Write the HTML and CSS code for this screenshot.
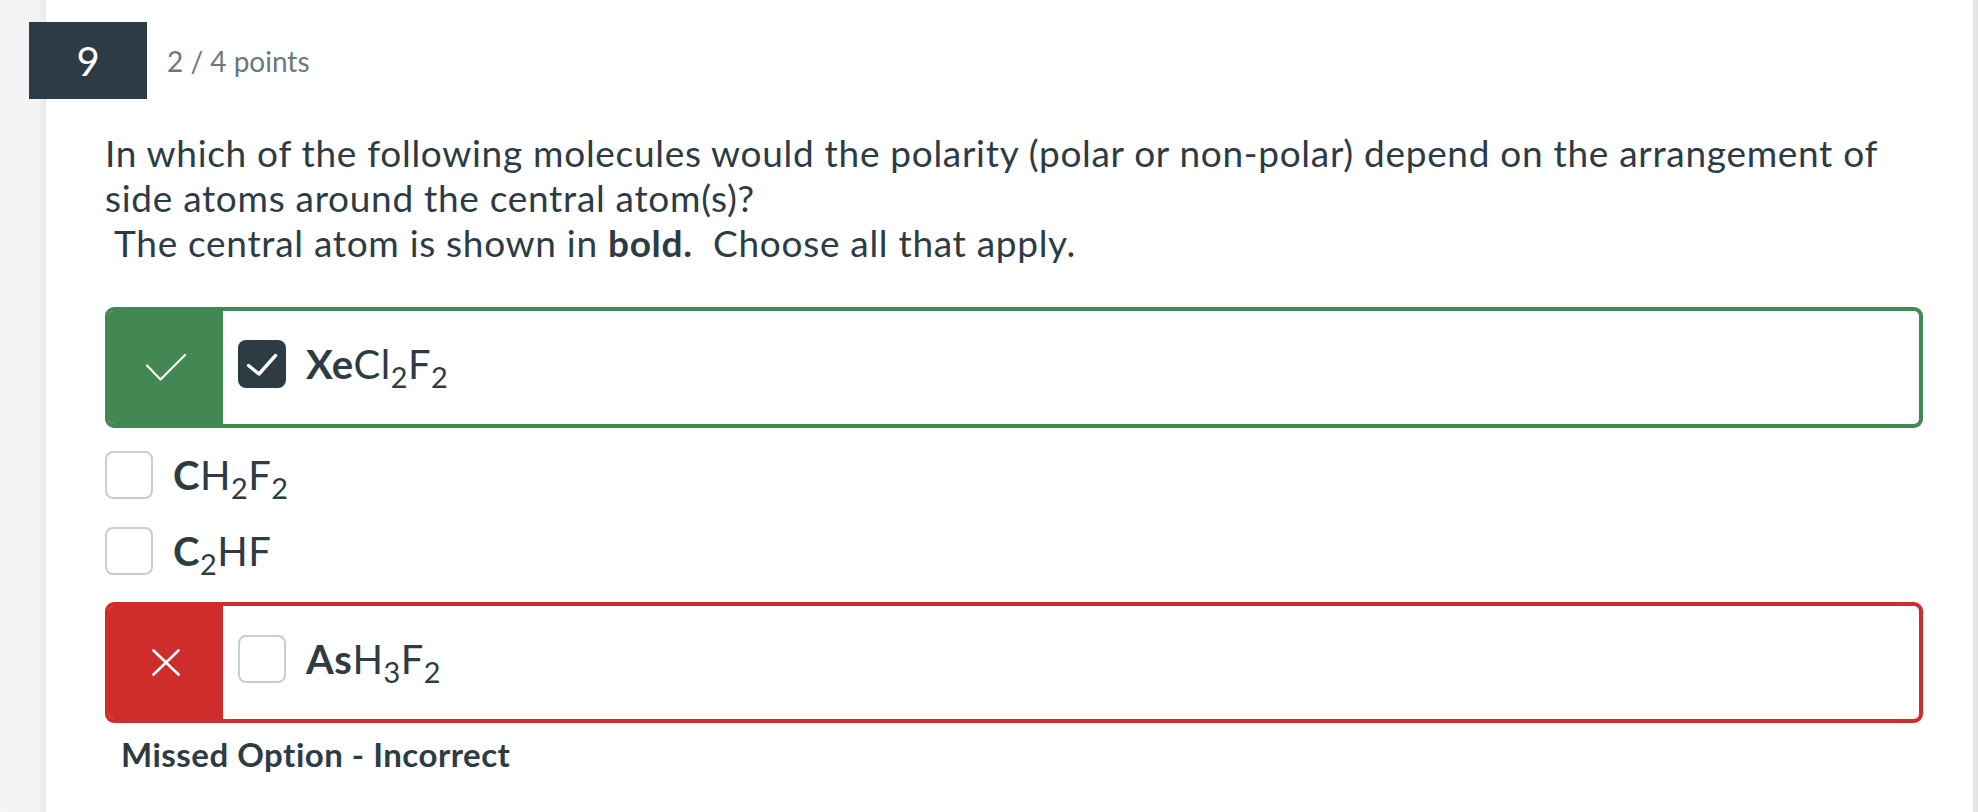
FILE: index.html
```html
<!DOCTYPE html>
<html lang="en">
<head>
<meta charset="utf-8">
<title>Question 9</title>
<link rel="stylesheet" href="styles.css">
</head>
<body>
  <div class="rail-left"></div>
  <main class="main">
    <div class="q-header">
      <div class="q-number">9</div>
      <div class="q-points">2 / 4 points</div>
    </div>
    <div class="q-text">
      <p>In which of the following molecules would the polarity (polar or non-polar) depend on the arrangement of side atoms around the central atom(s)?</p>
      <p>&nbsp;The central atom is shown in <strong>bold.</strong>&nbsp; Choose all that apply.</p>
    </div>
    <div class="answers">
      <div class="answer boxed correct">
        <div class="flag">
          <svg width="40" height="27" viewBox="0 0 40 27"><polyline points="1,11.5 14.5,25.5 39,1" fill="none" stroke="#fff" stroke-width="2.2" stroke-linecap="round" stroke-linejoin="round"/></svg>
        </div>
        <div class="body">
          <span class="box checked">
            <svg width="48" height="48" viewBox="0 0 48 48"><polyline points="10.5,25.5 21,34 37.5,15.5" fill="none" stroke="#fff" stroke-width="3.4" stroke-linecap="round" stroke-linejoin="round"/></svg>
          </span>
          <span class="formula"><b>Xe</b>Cl<sub>2</sub>F<sub>2</sub></span>
        </div>
      </div>
      <div class="answer plain first">
        <div class="body">
          <span class="box"></span>
          <span class="formula"><b>C</b>H<sub>2</sub>F<sub>2</sub></span>
        </div>
      </div>
      <div class="answer plain second">
        <div class="body">
          <span class="box"></span>
          <span class="formula"><b>C</b><sub>2</sub>HF</span>
        </div>
      </div>
      <div class="answer boxed wrong">
        <div class="flag">
          <svg width="28" height="27" viewBox="0 0 28 27"><path d="M1.5 1.5 L26.5 25.5 M26.5 1.5 L1.5 25.5" fill="none" stroke="#fff" stroke-width="2.6" stroke-linecap="round"/></svg>
        </div>
        <div class="body">
          <span class="box"></span>
          <span class="formula"><b>As</b>H<sub>3</sub>F<sub>2</sub></span>
        </div>
      </div>
      <div class="feedback">Missed Option - Incorrect</div>
    </div>
  </main>
  <div class="rail-right"></div>
</body>
</html>
```
FILE: styles.css
```css
html, body {
  margin: 0;
  padding: 0;
}
body {
  display: flex;
  height: 812px;
  overflow: hidden;
  background: #ffffff;
  font-family: Lato, "Noto Sans", sans-serif;
  color: #2d3b45;
}
.rail-left {
  width: 46px;
  flex: none;
  background: linear-gradient(to right, #f5f5f5 0%, #f3f3f3 80%, #eaeaea 100%);
}
.rail-right {
  width: 5px;
  flex: none;
  background: #e5e5e5;
}
.main {
  flex: 1;
  background: #ffffff;
  padding: 22px 50px 0 59px;
}
.q-header {
  display: flex;
  align-items: center;
  gap: 20px;
  margin-left: -76px;
}
.q-number {
  width: 118px;
  height: 77px;
  background: #2d3b45;
  color: #ffffff;
  font-size: 40px;
  display: flex;
  align-items: center;
  justify-content: center;
}
.q-points {
  font-size: 28px;
  color: #6b7780;
}
.q-text {
  margin-top: 31px;
  font-size: 37px;
  line-height: 45px;
  letter-spacing: 0.7px;
}
.q-text p {
  margin: 0;
}
.q-text strong {
  font-weight: 700;
}
.answers {
  margin-top: 42px;
}
.answer {
  display: flex;
}
.answer.boxed {
  border: 4px solid;
  border-radius: 9px;
  height: 121px;
  box-sizing: border-box;
  overflow: hidden;
}
.answer.correct {
  border-color: #438753;
}
.answer.wrong {
  border-color: #cf2c2c;
}
.flag {
  width: 114px;
  flex: none;
  display: flex;
  align-items: center;
  justify-content: center;
}
.correct .flag {
  background: #438753;
}
.wrong .flag {
  background: #cf2c2c;
}
.body {
  display: flex;
  align-items: flex-start;
  gap: 20px;
}
.boxed .body {
  padding: 29px 15px 0;
}
.plain.first {
  margin-top: 23px;
}
.plain.second {
  margin-top: 28px;
}
.answer.wrong {
  margin-top: 27px;
}
.box {
  width: 48px;
  height: 48px;
  box-sizing: border-box;
  border: 2px solid #c7cdd1;
  border-radius: 8px;
  background: #fff;
  flex: none;
  display: block;
}
.box.checked {
  background: #2d3b45;
  border: none;
}
.box svg {
  display: block;
}
.formula {
  font-size: 40px;
  line-height: 48px;
  letter-spacing: 0.5px;
  white-space: nowrap;
}
.formula b {
  font-weight: 700;
}
.formula sub {
  font-size: 0.72em;
  line-height: 0;
  vertical-align: -9px;
}
.feedback {
  margin-top: 9px;
  margin-left: 16px;
  font-size: 33px;
  font-weight: 700;
  line-height: 45px;
  letter-spacing: 0.5px;
}
```
